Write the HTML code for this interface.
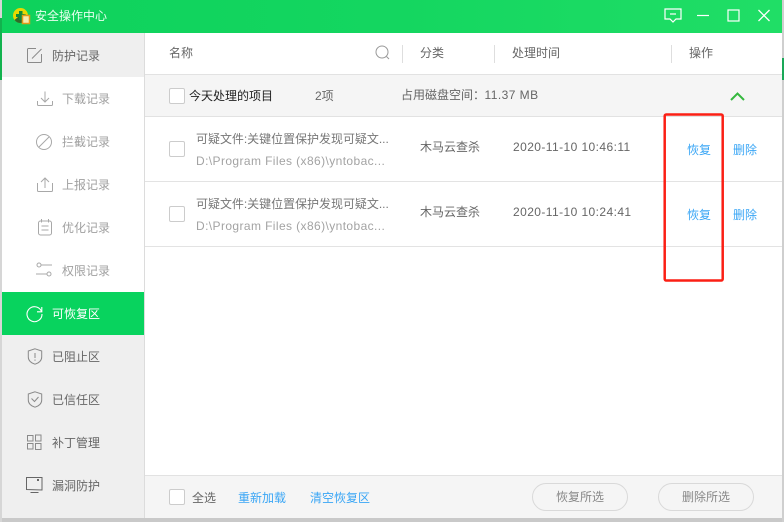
<!DOCTYPE html>
<html>
<head>
<meta charset="utf-8">
<style>
html,body{margin:0;padding:0;width:784px;height:522px;overflow:hidden;background:#c9c9c9}
body{position:relative;font-family:"Liberation Sans","Noto Sans CJK SC",sans-serif;font-size:12px;color:#666}
div,span{position:absolute;white-space:nowrap;box-sizing:border-box}
svg{position:absolute;overflow:visible}
.t{line-height:16px;height:16px}
.cb{width:16px;height:16px;background:#fff;border:1px solid #ccc;border-radius:2px}
.l1{left:52px;color:#666}
.l2{left:62px;color:#a0a0a0}
.ln{background:#e3e3e3;height:1px}
.vs{width:1px;height:18px;top:45px;background:#dedede}
.blue{color:#3aa6f5}
.btn{top:483px;width:96px;height:28px;border:1px solid #d9d9d9;border-radius:14px;color:#888;text-align:center;line-height:26px}
.ic{fill:none;stroke:#8a8a8a;stroke-width:1}
.ic2{fill:none;stroke:#a8a8a8;stroke-width:1}
</style>
</head>
<body>
<!-- background strips -->
<div style="left:0;top:0;width:2px;height:522px;background:#d6d6d6"></div>
<div style="left:0;top:18px;width:2px;height:62px;background:#12b24e"></div>
<div style="left:782px;top:0;width:2px;height:522px;background:#cfcfcf"></div>
<div style="left:782px;top:58px;width:2px;height:22px;background:#1aa858"></div>

<!-- window -->
<div style="left:2px;top:0;width:780px;height:518px;background:#fff"></div>

<!-- title bar -->
<div style="left:2px;top:0;width:780px;height:33px;background:linear-gradient(90deg,#0ed25c 0%,#14d660 50%,#20de66 100%)"></div>
<svg style="left:13px;top:8px" width="17" height="17" viewBox="0 0 17 17">
<circle cx="7.500" cy="7.500" r="7.500" fill="#e8d800"/>
<path d="M1.500 12A7.500 7.500 0 0 0 13.500 12L11 9H5z" fill="#2f6a2a"/>
<path d="M6 3h3.500v3h3v3h-3v3H6V9H3V6h3z" fill="#0f8a3a"/>
<rect x="9.500" y="7.500" width="7" height="8" fill="#f6ecb0" stroke="#e29a18" stroke-width="1.500"/>
<path d="M11 7h1M14 7h1" stroke="#e29a18" stroke-width="1"/>
</svg>
<div class="t" style="left:35px;top:8px;color:#e9fff0;font-size:12px">安全操作中心</div>
<svg style="left:664px;top:8px" width="20" height="16" viewBox="0 0 20 16" fill="none" stroke="#fff" stroke-width="1.200">
<path d="M1 1h16v10h-5l-3 3-3-3H1z"/><path d="M6 6h6"/>
</svg>
<svg style="left:696px;top:9px" width="14" height="14" viewBox="0 0 14 14" stroke="#fff" stroke-width="1.200"><path d="M1 6.500h12"/></svg>
<svg style="left:727px;top:9px" width="14" height="14" viewBox="0 0 14 14" fill="none" stroke="#fff" stroke-width="1.200"><rect x="1" y="1" width="11" height="11"/></svg>
<svg style="left:757px;top:9px" width="14" height="14" viewBox="0 0 14 14" fill="none" stroke="#fff" stroke-width="1.300"><path d="M1.500 1l11 11M12.500 1l-11 11"/></svg>

<!-- sidebar -->
<div style="left:2px;top:33px;width:142px;height:44px;background:#efefef"></div>
<div style="left:2px;top:292px;width:142px;height:43px;background:#08d35e"></div>
<div style="left:2px;top:335px;width:142px;height:183px;background:#efefef"></div>
<div style="left:144px;top:33px;width:1px;height:485px;background:#dcdcdc"></div>

<div class="t l1" style="top:48px">防护记录</div>
<div class="t l2" style="top:91px">下载记录</div>
<div class="t l2" style="top:134px">拦截记录</div>
<div class="t l2" style="top:177px">上报记录</div>
<div class="t l2" style="top:220px">优化记录</div>
<div class="t l2" style="top:263px">权限记录</div>
<div class="t l1" style="top:306px;color:#fff">可恢复区</div>
<div class="t l1" style="top:349px">已阻止区</div>
<div class="t l1" style="top:392px">已信任区</div>
<div class="t l1" style="top:435px">补丁管理</div>
<div class="t l1" style="top:478px">漏洞防护</div>

<!-- sidebar icons -->
<svg class="ic" style="left:27px;top:48px" width="16" height="16" viewBox="0 0 16 16"><path d="M14.500 6v7.500a1 1 0 0 1-1 1h-12a1 1 0 0 1-1-1v-12a1 1 0 0 1 1-1H9"/><path d="M5 10.500L14.500 1"/></svg>
<svg class="ic2" style="left:37px;top:91px" width="16" height="16" viewBox="0 0 16 16"><path d="M8 .5v10M4 7l4 4 4-4"/><path d="M.5 10v3.500a1 1 0 0 0 1 1h13a1 1 0 0 0 1-1V10"/></svg>
<svg class="ic2" style="left:36px;top:134px" width="16" height="16" viewBox="0 0 16 16"><circle cx="8" cy="8" r="7.500"/><path d="M3 13L13 3"/></svg>
<svg class="ic2" style="left:37px;top:177px" width="16" height="16" viewBox="0 0 16 16"><path d="M8 11V1M4 5l4-4 4 4"/><path d="M.5 6v7.500a1 1 0 0 0 1 1h13a1 1 0 0 0 1-1V6"/></svg>
<svg class="ic2" style="left:38px;top:219px" width="15" height="17" viewBox="0 0 15 17"><rect x=".5" y="2" width="13" height="14" rx="2"/><path d="M3.500 0v3.500M10.500 0v3.500M3.500 7h7M3.500 11h7"/></svg>
<svg class="ic2" style="left:36px;top:262px" width="17" height="16" viewBox="0 0 17 16"><circle cx="3" cy="3" r="2"/><path d="M5 3h11"/><circle cx="13" cy="12" r="2"/><path d="M0 12h11"/></svg>
<svg style="left:26px;top:305px" width="17" height="17" viewBox="0 0 17 17" fill="none" stroke="#fff" stroke-width="1.100"><path d="M15.500 6.500A7.500 7.500 0 1 0 16 9"/><path d="M15.800 2v4.800H11"/></svg>
<svg class="ic" style="left:27px;top:348px" width="16" height="17" viewBox="0 0 16 17"><path d="M8 .8L14.700 3v6c0 3.500-3 6-6.700 7.200C4.300 15 1.300 12.500 1.300 9V3z"/><path d="M8 5v5M8 11.500v1.200"/></svg>
<svg class="ic" style="left:27px;top:391px" width="16" height="17" viewBox="0 0 16 17"><path d="M8 .8L14.700 3v6c0 3.500-3 6-6.700 7.200C4.300 15 1.300 12.500 1.300 9V3z"/><path d="M4.500 7.500L7.500 10.500 11.500 6"/></svg>
<svg class="ic" style="left:27px;top:435px" width="15" height="15" viewBox="0 0 15 15"><rect x=".5" y=".5" width="5.500" height="5.500"/><rect x="8.500" y="0" width="5.500" height="6"/><rect x=".5" y="8.500" width="5.500" height="5.500"/><rect x="8.500" y="8.500" width="5.500" height="6"/></svg>
<svg style="left:26px;top:477px" width="17" height="17" viewBox="0 0 17 17" fill="none" stroke="#666" stroke-width="1"><path d="M.5 12.500V.5h15.500v12.500z"/><rect x="11" y="2" width="2" height="2" fill="#666" stroke="none"/><path d="M4.500 15.500h8"/></svg>

<!-- table header -->
<div class="t" style="left:169px;top:45px">名称</div>
<svg style="left:375px;top:45px" width="16" height="16" viewBox="0 0 16 16" fill="none" stroke="#999" stroke-width="1"><circle cx="7" cy="7" r="6"/><path d="M11.500 11.500L14 14"/></svg>
<div class="vs" style="left:402px"></div>
<div class="t" style="left:420px;top:45px">分类</div>
<div class="vs" style="left:494px"></div>
<div class="t" style="left:512px;top:45px">处理时间</div>
<div class="vs" style="left:671px"></div>
<div class="t" style="left:689px;top:45px">操作</div>

<!-- group row -->
<div style="left:145px;top:74px;width:637px;height:43px;background:#f5f5f5;border-top:1px solid #e2e2e2;border-bottom:1px solid #e2e2e2"></div>
<div class="cb" style="left:169px;top:88px"></div>
<div class="t" style="left:189px;top:88px;color:#222">今天处理的项目</div>
<div class="t" style="left:315px;top:88px">2项</div>
<div class="t" style="left:401px;top:87px">占用磁盘空间：</div>
<div class="t" style="left:484.500px;top:87px;letter-spacing:.45px">11.37 MB</div>
<svg style="left:730px;top:91px" width="15" height="10" viewBox="0 0 15 10" fill="none" stroke="#35b83e" stroke-width="2"><path d="M1 9L7.500 2.500 14 9"/></svg>

<!-- row 1 -->
<div class="cb" style="left:169px;top:141px"></div>
<div class="t" style="left:196px;top:131px;color:#777;letter-spacing:-.03px">可疑文件:关键位置保护发现可疑文...</div>
<div class="t" style="left:196px;top:153px;color:#a3a3a3;letter-spacing:.4px">D:\Program Files (x86)\yntobac...</div>
<div class="t" style="left:420px;top:139px">木马云查杀</div>
<div class="t" style="left:513px;top:139px;letter-spacing:.42px">2020-11-10 10:46:11</div>
<div class="t blue" style="left:687px;top:142px">恢复</div>
<div class="t blue" style="left:733px;top:142px">删除</div>
<div class="ln" style="left:145px;top:181px;width:637px"></div>

<!-- row 2 -->
<div class="cb" style="left:169px;top:206px"></div>
<div class="t" style="left:196px;top:196px;color:#777;letter-spacing:-.03px">可疑文件:关键位置保护发现可疑文...</div>
<div class="t" style="left:196px;top:218px;color:#a3a3a3;letter-spacing:.4px">D:\Program Files (x86)\yntobac...</div>
<div class="t" style="left:420px;top:204px">木马云查杀</div>
<div class="t" style="left:513px;top:204px;letter-spacing:.42px">2020-11-10 10:24:41</div>
<div class="t blue" style="left:687px;top:207px">恢复</div>
<div class="t blue" style="left:733px;top:207px">删除</div>
<div class="ln" style="left:145px;top:246px;width:637px"></div>

<!-- red box -->
<svg style="left:0;top:0" width="784" height="522"><rect x="664.700" y="114.500" width="58" height="166" rx="1.500" fill="none" stroke="#fb1f14" stroke-width="2.500"/></svg>

<!-- footer -->
<div style="left:145px;top:475px;width:637px;height:43px;background:#f5f5f5;border-top:1px solid #e2e2e2"></div>
<div class="cb" style="left:169px;top:489px"></div>
<div class="t" style="left:192px;top:490px">全选</div>
<div class="t blue" style="left:238px;top:490px">重新加载</div>
<div class="t blue" style="left:310px;top:490px">清空恢复区</div>
<div class="btn" style="left:532px">恢复所选</div>
<div class="btn" style="left:658px">删除所选</div>
</body>
</html>
